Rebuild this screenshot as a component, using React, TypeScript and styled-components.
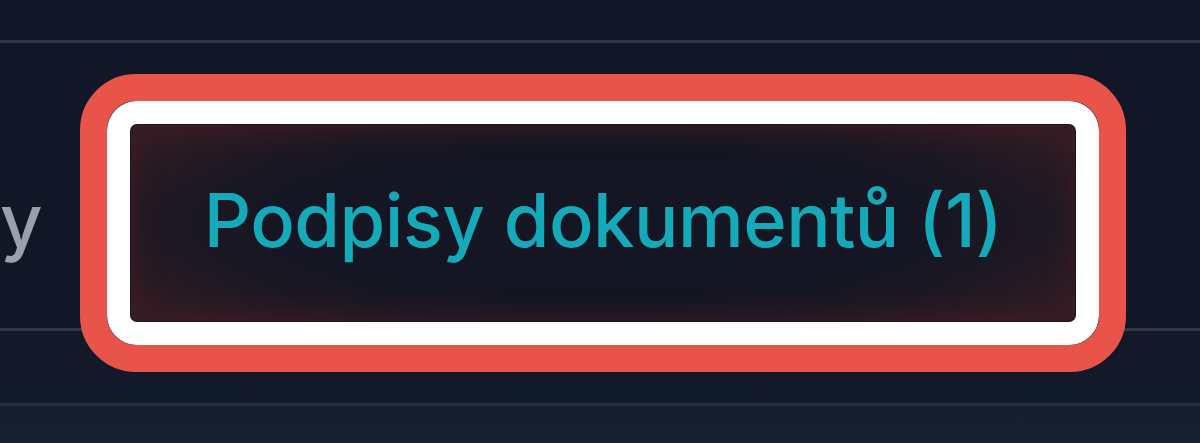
import React from "react";
import styled, { createGlobalStyle } from "styled-components";

const Global = createGlobalStyle`
  html, body { margin: 0; padding: 0; background: #111726; }
  body { font-family: Inter, "Noto Sans", sans-serif; overflow: hidden; }
`;

const Page = styled.div`
  width: 1200px;
  height: 443px;
  background: #111726;
  display: flex;
  flex-direction: column;
  overflow: hidden;
`;

const TopBar = styled.div`
  height: 40px;
  flex: none;
  border-bottom: 3px solid #2d3747;
`;

const TabBar = styled.div`
  height: 288px;
  flex: none;
  box-sizing: border-box;
  padding-bottom: 6px;
  display: grid;
  grid-template-columns: 130px auto 1fr;
  align-items: end;
  border-bottom: 3px solid #2d3747;
`;

const PrevCell = styled.div`
  height: 198px;
  box-sizing: border-box;
  display: flex;
  align-items: center;
  justify-content: flex-end;
  overflow: hidden;
  white-space: nowrap;
  padding-right: 88px;
  padding-bottom: 6px;
`;

const TabLabel = styled.span<{ $active?: boolean }>`
  font-size: 74px;
  font-weight: 500;
  letter-spacing: -0.5px;
  line-height: 1;
  color: ${(p) => (p.$active ? "#15aab9" : "#9aa1ad")};
`;

const ActiveTab = styled.div`
  position: relative;
  z-index: 1;
  width: 946px;
  height: 198px;
  box-sizing: border-box;
  display: flex;
  align-items: center;
  justify-content: center;
  padding-bottom: 6px;
  border-radius: 7px;
  border: 1.5px solid #22121a;
  background: radial-gradient(ellipse 60% 70% at 50% 50%, #141624 55%, #1c1822 75%, #301c24 100%);
  box-shadow: inset 0 0 30px rgba(70, 28, 38, 0.7);

  &::before {
    content: "";
    position: absolute;
    inset: -24px;
    border: 23px solid #ffffff;
    border-radius: 30px;
    pointer-events: none;
  }

  &::after {
    content: "";
    position: absolute;
    inset: -51px;
    border: 27px solid #e8544a;
    border-radius: 56px;
    pointer-events: none;
  }
`;

const SubBar = styled.div`
  height: 72px;
  flex: none;
  border-bottom: 3px solid #273142;
  background: linear-gradient(180deg, #121827 0%, #131a29 100%);
`;

const Content = styled.div`
  flex: 1;
  background: linear-gradient(180deg, #151d2d 0%, #18212f 100%);
`;

export default function App() {
  return (
    <Page>
      <Global />
      <TopBar />
      <TabBar>
        <PrevCell>
          <TabLabel>Faktury</TabLabel>
        </PrevCell>
        <ActiveTab>
          <TabLabel $active>Podpisy dokumentů (1)</TabLabel>
        </ActiveTab>
        <div />
      </TabBar>
      <SubBar />
      <Content />
    </Page>
  );
}
